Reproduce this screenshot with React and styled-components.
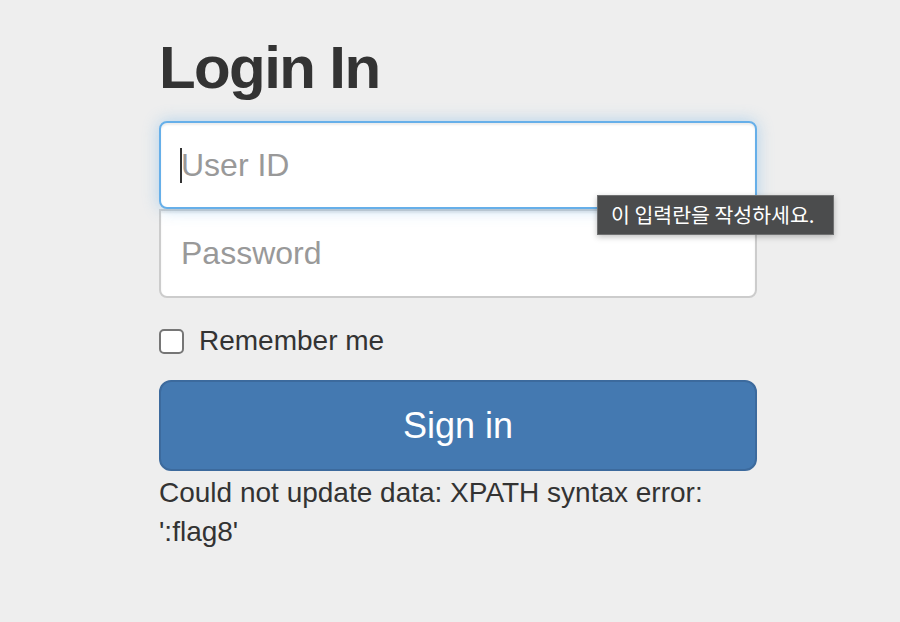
import React from 'react'
import styled, { createGlobalStyle } from 'styled-components'

const GlobalStyle = createGlobalStyle`
    html, body {
        margin: 0;
        padding: 0;
        background: #eeeeee;
    }
    body {
        font-family: "Liberation Sans", Arial, sans-serif;
        color: #333;
    }
`

const Page = styled.div`
    min-height: 622px;
    padding: 35px 0 0 159px;
    box-sizing: border-box;
`

const Form = styled.form`
    width: 598px;
    position: relative;
`

const Heading = styled.h2`
    margin: 0 0 20px;
    font-size: 60px;
    line-height: 66px;
    font-weight: 700;
    letter-spacing: -1.6px;
    color: #333;
`

const Field = styled.div`
    position: relative;
`

const Input = styled.input`
    display: block;
    width: 100%;
    box-sizing: border-box;
    height: ${p => (p.$first ? '88px' : '89px')};
    padding: 0 20px;
    font-family: "Liberation Sans", Arial, sans-serif;
    font-size: 32px;
    background: #fff;
    outline: none;
    border: 2px solid ${p => (p.$focused ? '#66afe9' : '#cccccc')};
    border-radius: ${p => (p.$first ? '8px' : '0 0 8px 8px')};
    box-shadow: ${p =>
        p.$focused
            ? 'inset 0 2px 2px rgba(0,0,0,.075), 0 0 16px rgba(102,175,233,.45)'
            : 'inset 0 2px 2px rgba(0,0,0,.075)'};
    margin-bottom: ${p => (p.$first ? '0' : '20px')};
    position: relative;
    z-index: ${p => (p.$focused ? 2 : 1)};

    &::placeholder {
        color: #999;
    }
`

const Caret = styled.span`
    position: absolute;
    left: 21px;
    top: 27px;
    width: 2px;
    height: 35px;
    background: #333;
    z-index: 3;
`

const CheckRow = styled.label`
    display: flex;
    align-items: center;
    height: 40px;
    padding-top: 3px;
    margin-bottom: 19px;
    font-size: 28px;
    line-height: 40px;
    color: #333;
`

const Box = styled.input.attrs({ type: 'checkbox' })`
    appearance: none;
    margin: 0 15px 0 0;
    width: 25px;
    height: 25px;
    border: 2px solid #767676;
    border-radius: 5px;
    background: #fff;
    box-sizing: border-box;
`

const Button = styled.button`
    display: block;
    width: 100%;
    height: 91px;
    font-family: "Liberation Sans", Arial, sans-serif;
    font-size: 36px;
    color: #fff;
    background: #4479b1;
    border: 2px solid #3c6a9d;
    border-radius: 12px;
    cursor: pointer;
`

const Message = styled.p`
    margin: 0;
    padding-top: 2px;
    font-size: 28px;
    line-height: 39px;
    color: #333;
`

const Tooltip = styled.div`
    position: absolute;
    left: 438px;
    top: 160px;
    width: 237px;
    height: 40px;
    box-sizing: border-box;
    background: #4b4c4d;
    border: 1px solid #6f7071;
    box-shadow: 0 2px 6px rgba(0,0,0,.25);
    color: #fff;
    font-family: "Noto Sans CJK KR", "Noto Sans", sans-serif;
    font-size: 20.5px;
    line-height: 37px;
    padding-left: 13px;
    white-space: nowrap;
    z-index: 10;
`

const App = () => {
    return (
        <Page>
            <GlobalStyle />
            <Form onSubmit={e => e.preventDefault()}>
                <Heading>Login In</Heading>
                <Field>
                    <Input $first $focused placeholder="User ID" />
                    <Caret />
                </Field>
                <Field>
                    <Input type="password" placeholder="Password" />
                </Field>
                <CheckRow>
                    <Box />
                    Remember me
                </CheckRow>
                <Button type="submit">Sign in</Button>
                <Message>Could not update data: XPATH syntax error: ':flag8'</Message>
                <Tooltip>이 입력란을 작성하세요.</Tooltip>
            </Form>
        </Page>
    )
}

export default App
